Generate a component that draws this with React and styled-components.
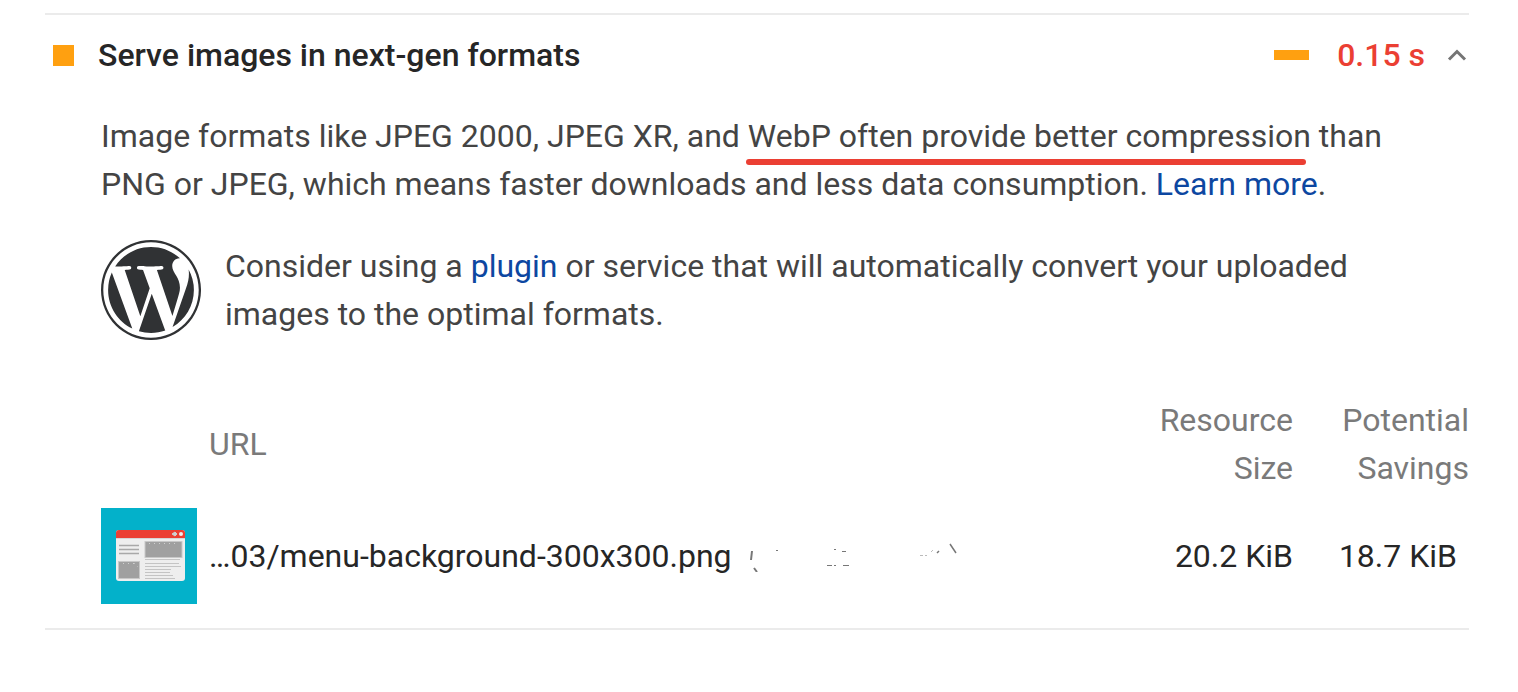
import { useState } from "react";
import styled, { createGlobalStyle } from "styled-components";

const GlobalStyle = createGlobalStyle`
  * {
    box-sizing: border-box;
  }

  body {
    margin: 0;
    background-color: white;
    color: #262626;
    font-family: Roboto, "Liberation Sans", sans-serif;
    font-size: 32px;
    line-height: 48px;
  }
`;

const Page = styled.main`
  padding: 13px 49px 60px 45px;
`;

const Audit = styled.section`
  border-top: 2px solid #ebebeb;
  border-bottom: 2px solid #ebebeb;
`;

const AuditHeader = styled.button`
  display: flex;
  align-items: center;
  width: 100%;
  height: 80px;
  padding: 0 0 0 8px;
  border: none;
  background: none;
  color: inherit;
  font: inherit;
  font-weight: 500;
  text-align: left;
  cursor: pointer;
`;

const Marker = styled.span`
  width: 21px;
  height: 21px;
  margin-right: 24px;
  background-color: #ffa010;
`;

const Title = styled.span`
  flex: 1;
`;

const Bar = styled.span`
  width: 35px;
  height: 10px;
  margin-right: 28px;
  background-color: #ffa010;
`;

const Time = styled.span`
  margin-right: 20px;
  color: #eb3f33;
`;

const Chevron = styled.svg`
  width: 24px;
  height: 24px;
  fill: none;
  stroke: #757575;
  stroke-width: 3;
  transform: ${(props) => (props.$open ? "none" : "rotate(180deg)")};
`;

const Details = styled.div`
  padding: 17px 0 24px 56px;
`;

const Description = styled.p`
  margin: 0;
  padding-right: 60px;
  color: #444444;
`;

const Highlight = styled.span`
  position: relative;

  &::after {
    content: "";
    position: absolute;
    left: -2px;
    right: 5px;
    bottom: -10px;
    height: 6px;
    border-radius: 3px;
    background-color: #eb3f33;
  }
`;

const TextLink = styled.a`
  color: #0d47a1;
  text-decoration: none;

  &:hover {
    text-decoration: underline;
  }
`;

const StackPack = styled.div`
  display: flex;
  align-items: center;
  gap: 24px;
  padding: 32px 60px 56px 0;
`;

const Logo = styled.svg`
  flex: none;
  width: 100px;
  height: 100px;
  fill: #303234;
`;

const Table = styled.table`
  width: 100%;
  border-collapse: collapse;
`;

const HeadCell = styled.th`
  width: ${(props) => props.$width || "auto"};
  padding: 0 0 16px ${(props) => (props.$number ? "40px" : "12px")};
  color: #7a7a7a;
  font-weight: 400;
  text-align: ${(props) => (props.$number ? "right" : "left")};
`;

const Cell = styled.td`
  padding: 0 ${(props) => (props.$last ? "12px" : "0")} 0 ${(props) => (props.$thumb ? "0" : "12px")};
  text-align: ${(props) => (props.$number ? "right" : "left")};
  white-space: nowrap;
`;

const Thumb = styled.svg`
  display: block;
  width: 96px;
  height: 96px;
`;

const UrlLine = styled.div`
  display: flex;
  align-items: center;
  gap: 18px;
`;

const Host = styled.svg`
  width: 210px;
  height: 32px;
  fill: none;
  stroke: #777777;
`;

const WordPressLogo = () => (
  <Logo viewBox="0 0 122.52 122.52" role="img" aria-label="WordPress">
    <path d="M8.708 61.26c0 20.802 12.089 38.779 29.619 47.298L13.258 39.872a52.354 52.354 0 0 0-4.55 21.388z" />
    <path d="M96.74 58.608c0-6.495-2.333-10.993-4.334-14.494-2.664-4.329-5.161-7.995-5.161-12.324 0-4.831 3.664-9.328 8.825-9.328.233 0 .454.029.681.042-9.35-8.566-21.807-13.796-35.489-13.796-18.36 0-34.513 9.42-43.91 23.688 1.233.037 2.395.063 3.382.063 5.497 0 14.006-.667 14.006-.667 2.833-.167 3.167 3.994.337 4.329 0 0-2.847.335-6.015.501L48.2 93.547l11.501-34.493-8.188-22.434c-2.83-.166-5.511-.501-5.511-.501-2.832-.166-2.5-4.496.332-4.329 0 0 8.679.667 13.843.667 5.496 0 14.006-.667 14.006-.667 2.835-.167 3.168 3.994.337 4.329 0 0-2.853.335-6.015.501l18.992 56.494 5.242-17.517c2.272-7.269 4.001-12.49 4.001-16.989z" />
    <path d="M62.184 65.857l-15.768 45.819a52.552 52.552 0 0 0 14.846 2.141c6.12 0 11.989-1.058 17.452-2.979a4.615 4.615 0 0 1-.374-.724L62.184 65.857z" />
    <path d="M107.376 36.046c.226 1.674.354 3.471.354 5.404 0 5.333-.996 11.328-3.996 18.824l-16.053 46.413c15.624-9.111 26.133-26.038 26.133-45.426a52.266 52.266 0 0 0-6.438-25.215z" />
    <path d="M61.262 0C27.483 0 0 27.481 0 61.26c0 33.783 27.483 61.263 61.262 61.263 33.778 0 61.265-27.48 61.265-61.263C122.526 27.481 95.039 0 61.262 0zm0 119.715c-32.23 0-58.453-26.223-58.453-58.455 0-32.23 26.222-58.451 58.453-58.451 32.229 0 58.45 26.221 58.45 58.451 0 32.232-26.221 58.455-58.45 58.455z" />
  </Logo>
);

const PreviewThumb = () => (
  <Thumb viewBox="0 0 96 96" role="img" aria-label="Preview">
    <rect width="96" height="96" fill="#03b1ca" />
    <rect x="15" y="22" width="69" height="51" rx="3" fill="#eeeeee" />
    <path d="M15 30v-5q0-3 3-3h63q3 0 3 3v5z" fill="#eb3f33" />
    <path d="M15 30.5h69" stroke="#d5d5d5" />
    <path d="M71 26l3-2 2 2-2 2z" fill="#cfcfcf" stroke="#cfcfcf" />
    <circle cx="80" cy="26" r="2" fill="#eeeeee" />
    <rect x="44" y="33.5" width="37" height="16" fill="#a0a0a0" stroke="#c8c8c8" />
    <rect x="17.5" y="53.5" width="21" height="17" fill="#a0a0a0" stroke="#c8c8c8" />
    <path d="M48 35.5h30" stroke="#d0d0d0" strokeDasharray="1 4" />
    <path d="M22 55.5h12M33 55l4 4" stroke="#d0d0d0" strokeDasharray="1 4" />
    <path d="M18 37.5h20M18 41.5h20M18 45.5h20" stroke="#a8a8a8" strokeWidth="1.5" />
    <path
      d="M44 51.5h35M44 55.5h34M44 58.5h36M44 61.5h26M44 64.5h25M44 67.5h28M44 70.5h30"
      stroke="#c4c4c4"
    />
  </Thumb>
);

const App = () => {
  const [open, setOpen] = useState(true);

  return (
    <Page>
      <GlobalStyle />
      <Audit>
        <AuditHeader aria-expanded={open} onClick={() => setOpen(!open)}>
          <Marker />
          <Title>Serve images in next-gen formats</Title>
          <Bar />
          <Time>0.15 s</Time>
          <Chevron viewBox="0 0 24 24" $open={open}>
            <path d="M4 16.5l8-8 8 8" />
          </Chevron>
        </AuditHeader>

        {open && (
          <Details>
            <Description>
              Image formats like JPEG 2000, JPEG XR, and{" "}
              <Highlight>WebP often provide better compression</Highlight> than
              PNG or JPEG, which means faster downloads and less data
              consumption. <TextLink href="#learn-more">Learn more</TextLink>.
            </Description>

            <StackPack>
              <WordPressLogo />
              <Description>
                Consider using a <TextLink href="#plugin">plugin</TextLink> or
                service that will automatically convert your uploaded images to
                the optimal formats.
              </Description>
            </StackPack>

            <Table>
              <thead>
                <tr>
                  <HeadCell $width="96px" />
                  <HeadCell scope="col">URL</HeadCell>
                  <HeadCell scope="col" $number $width="176px">
                    Resource Size
                  </HeadCell>
                  <HeadCell scope="col" $number $width="176px">
                    Potential Savings
                  </HeadCell>
                </tr>
              </thead>
              <tbody>
                <tr>
                  <Cell $thumb>
                    <PreviewThumb />
                  </Cell>
                  <Cell>
                    <UrlLine>
                      <span>…03/menu-background-300x300.png</span>
                      <Host viewBox="0 0 210 32" aria-hidden="true">
                        <path d="M2 11l-1 9M4 28l3 4" strokeWidth="2" />
                        <path d="M26 10.5h2M84 9.5h2M92 11.5h4M77 25.5h5M84 25.5h2M93 25.5h6" />
                        <path d="M170 15.5h3M175 15.5h2M181 12l2-2" stroke="#bbbbbb" />
                        <path d="M187 13l2-2M200 4l6 9" strokeWidth="1.5" />
                      </Host>
                    </UrlLine>
                  </Cell>
                  <Cell $number>20.2 KiB</Cell>
                  <Cell $number $last>
                    18.7 KiB
                  </Cell>
                </tr>
              </tbody>
            </Table>
          </Details>
        )}
      </Audit>
    </Page>
  );
};

export default App;
